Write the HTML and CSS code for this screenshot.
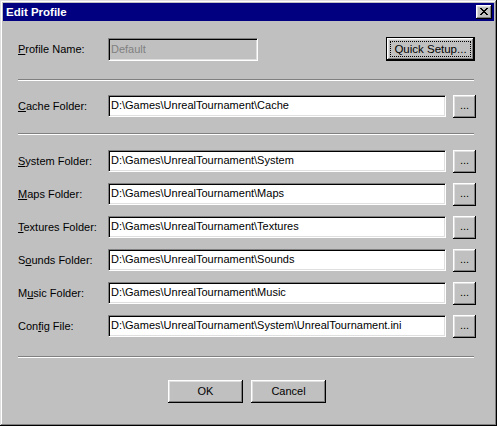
FILE: index.html
```html
<!DOCTYPE html>
<html>
<head>
<meta charset="utf-8">
<title>Edit Profile</title>
<link rel="stylesheet" href="styles.css">
</head>
<body>
<div class="window">
  <div class="titlebar">
    <span class="title">Edit Profile</span>
    <div class="close">
      <svg width="8" height="7" viewBox="0 0 8 7" shape-rendering="crispEdges">
        <path d="M0 0h2v1H0zM6 0h2v1H6zM1 1h2v1H1zM5 1h2v1H5zM2 2h4v1H2zM3 3h2v1H3zM2 4h4v1H2zM1 5h2v1H1zM5 5h2v1H5zM0 6h2v1H0zM6 6h2v1H6z" fill="#000"/>
      </svg>
    </div>
  </div>
  <div class="body">
    <div class="row profile-row">
      <span class="label"><u>P</u>rofile Name:</span>
      <div class="field short disabled">Default</div>
      <div class="btn default quick"><span class="focus">Quick Setup...</span></div>
    </div>
    <div class="sep sep-a"></div>
    <div class="row cache-row">
      <span class="label"><u>C</u>ache Folder:</span>
      <div class="field">D:\Games\UnrealTournament\Cache</div>
      <div class="btn browse">...</div>
    </div>
    <div class="sep sep-b"></div>
    <div class="rows">
      <div class="row">
        <span class="label"><u>S</u>ystem Folder:</span>
        <div class="field">D:\Games\UnrealTournament\System</div>
        <div class="btn browse">...</div>
      </div>
      <div class="row">
        <span class="label"><u>M</u>aps Folder:</span>
        <div class="field">D:\Games\UnrealTournament\Maps</div>
        <div class="btn browse">...</div>
      </div>
      <div class="row">
        <span class="label"><u>T</u>extures Folder:</span>
        <div class="field">D:\Games\UnrealTournament\Textures</div>
        <div class="btn browse">...</div>
      </div>
      <div class="row">
        <span class="label">S<u>o</u>unds Folder:</span>
        <div class="field">D:\Games\UnrealTournament\Sounds</div>
        <div class="btn browse">...</div>
      </div>
      <div class="row">
        <span class="label">M<u>u</u>sic Folder:</span>
        <div class="field">D:\Games\UnrealTournament\Music</div>
        <div class="btn browse">...</div>
      </div>
      <div class="row">
        <span class="label">Con<u>f</u>ig File:</span>
        <div class="field">D:\Games\UnrealTournament\System\UnrealTournament.ini</div>
        <div class="btn browse">...</div>
      </div>
    </div>
    <div class="sep sep-c"></div>
    <div class="actions">
      <div class="btn action">OK</div>
      <div class="btn action">Cancel</div>
    </div>
  </div>
</div>
</body>
</html>
```
FILE: styles.css
```css
* { box-sizing: border-box; }
html, body {
  margin: 0;
  padding: 0;
  background: #c0c0c0;
}
body {
  font-family: "Liberation Sans", Arial, sans-serif;
  font-size: 11px;
  color: #000;
}
.window {
  width: 497px;
  height: 426px;
  background: #c0c0c0;
  padding: 3px;
  box-shadow: inset -1px -1px 0 #000, inset 1px 1px 0 #dfdfdf,
              inset -2px -2px 0 #808080, inset 2px 2px 0 #fff;
  display: flex;
  flex-direction: column;
}
.titlebar {
  height: 18px;
  background: #000080;
  display: flex;
  align-items: center;
  padding: 0 2px 0 3px;
}
.title {
  color: #fff;
  font-weight: bold;
  font-size: 11.5px;
  flex: 1;
  letter-spacing: 0;
}
.close {
  width: 16px;
  height: 14px;
  background: #c0c0c0;
  box-shadow: inset -1px -1px 0 #000, inset 1px 1px 0 #fff,
              inset -2px -2px 0 #808080, inset 2px 2px 0 #dfdfdf;
  display: flex;
  align-items: center;
  justify-content: center;
  padding: 0 1px 1px 0;
}
.close svg { display: block; }
.body {
  padding: 0 18px 0 15px;
  display: flex;
  flex-direction: column;
}
.row {
  display: flex;
  align-items: flex-start;
  height: 23px;
}
.label {
  width: 90px;
  flex: none;
  line-height: 22px;
  white-space: nowrap;
}
.label u { text-decoration: underline; text-underline-offset: 1px; }
.field {
  width: 338px;
  height: 22px;
  flex: none;
  background: #fff;
  padding: 0 0 0 2px;
  line-height: 19px;
  white-space: nowrap;
  overflow: hidden;
  border-style: solid;
  border-width: 1px;
  border-color: #808080 #fff #fff #808080;
  box-shadow: inset 1px 1px 0 #000, inset -1px -1px 0 #dfdfdf;
}
.field.short { width: 150px; height: 23px; line-height: 20px; }
.field.disabled {
  background: #c0c0c0;
  color: #808080;
}
.btn {
  background: #c0c0c0;
  box-shadow: inset -1px -1px 0 #000, inset 1px 1px 0 #fff,
              inset -2px -2px 0 #808080, inset 2px 2px 0 #dfdfdf;
  display: flex;
  align-items: center;
  justify-content: center;
  flex: none;
}
.browse {
  width: 23px;
  height: 23px;
  margin-left: 7px;
  padding-bottom: 3px;
}
.profile-row {
  margin-top: 16px;
  height: 24px;
  align-items: center;
}
.quick {
  margin-left: auto;
  margin-right: 1px;
  width: 89px;
  height: 24px;
  border: 1px solid #000;
  font-size: 11.5px;
}
.focus {
  display: block;
  outline: 1px dotted #000;
  outline-offset: 0;
  width: 79px;
  height: 14px;
  line-height: 14px;
  text-align: center;
  margin-top: -1px;
}
.sep {
  height: 2px;
  border-top: 1px solid #808080;
  border-bottom: 1px solid #fff;
  margin-right: 2px;
}
.sep-a { margin-top: 18px; }
.cache-row { margin-top: 14px; }
.sep-b { margin-top: 15px; }
.rows {
  margin-top: 15px;
  display: flex;
  flex-direction: column;
  gap: 10px;
}
.sep-c { margin-top: 18px; }
.actions {
  margin-top: 22px;
  display: flex;
  justify-content: center;
  gap: 8px;
}
.action {
  width: 75px;
  height: 23px;
  padding-bottom: 1px;
}
```
